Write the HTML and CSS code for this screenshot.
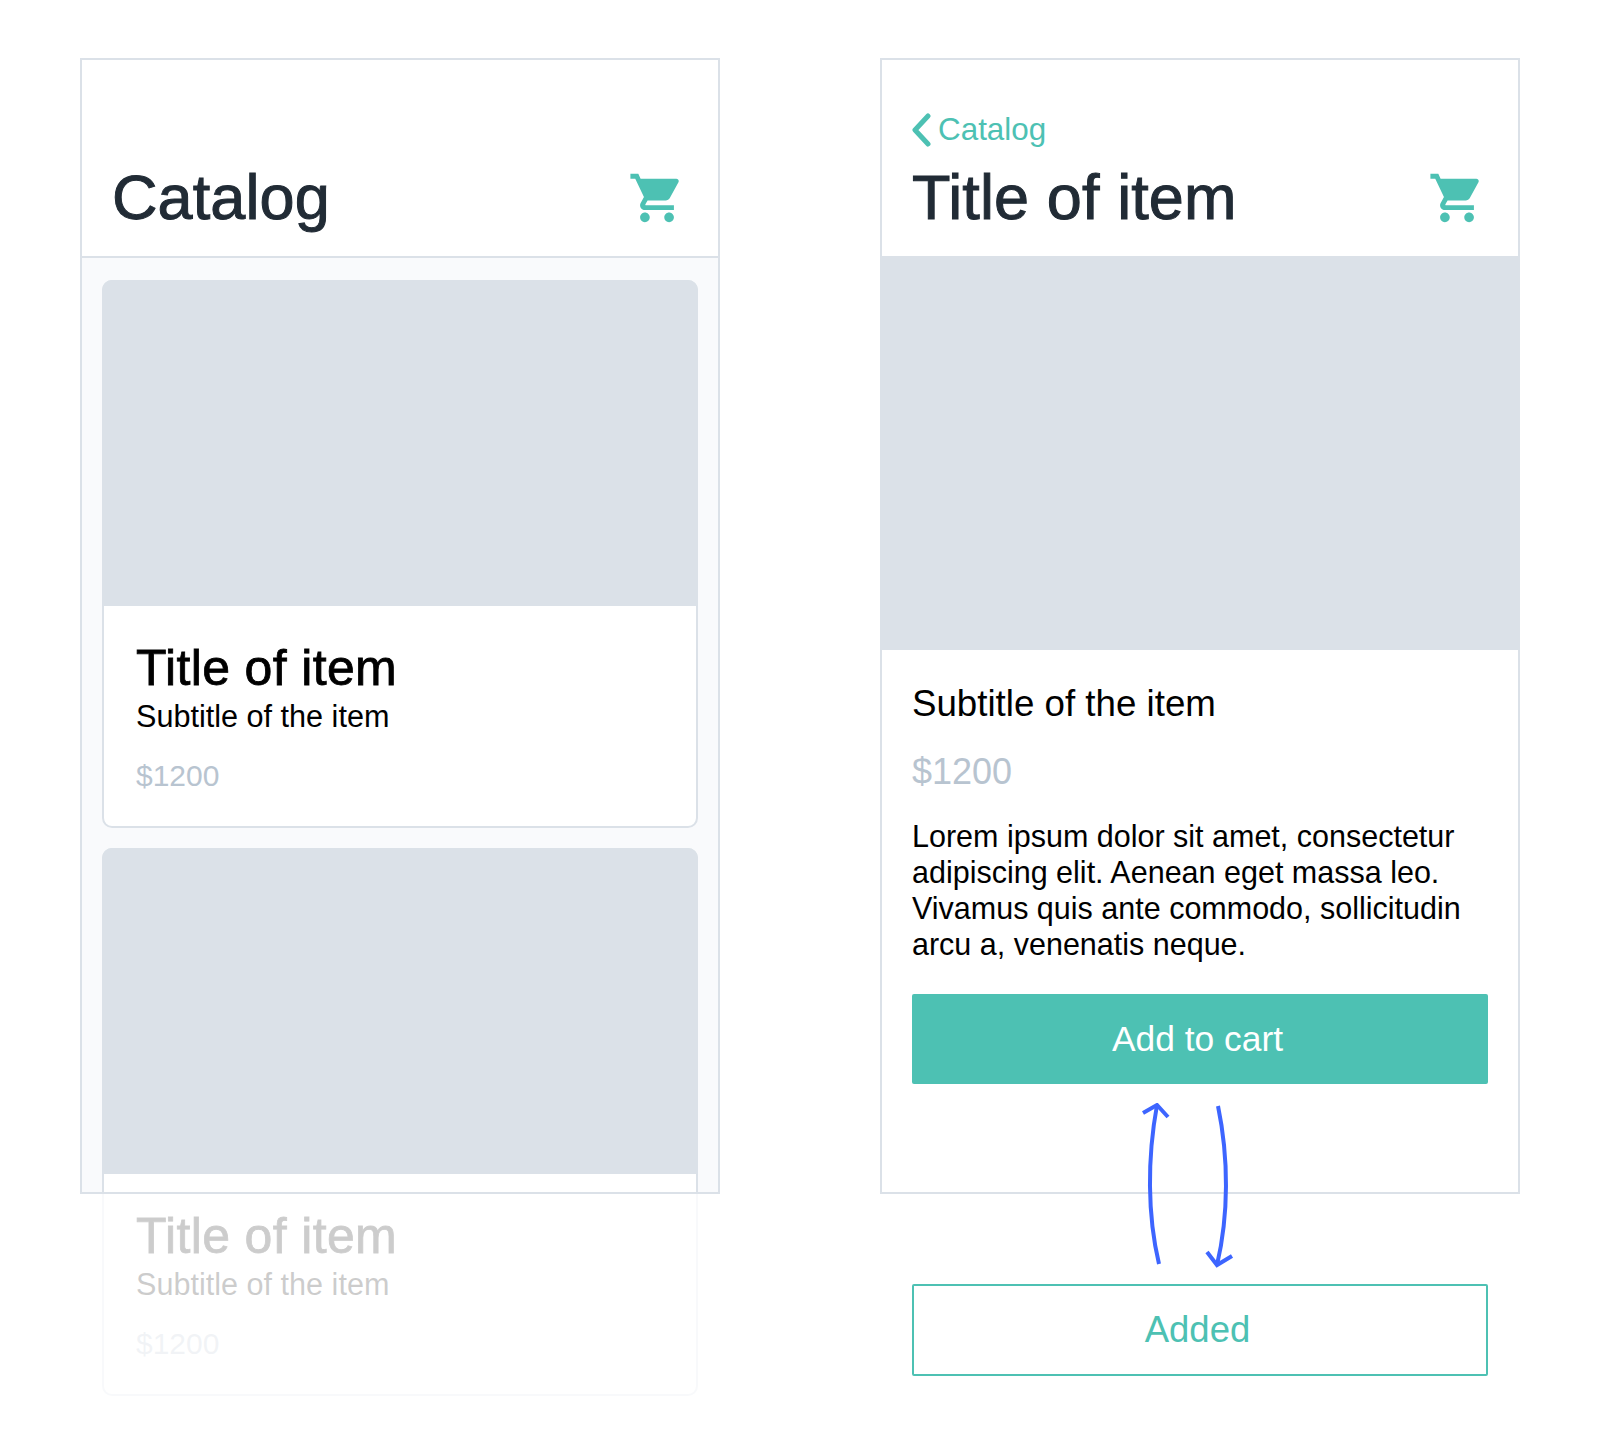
FILE: index.html

```html
<!DOCTYPE html>
<html lang="en">
<head>
    <meta charset="UTF-8">
    <title>Catalog</title>
    <link rel="stylesheet" href="styles.css">
</head>
<body>
    <div class="screens">
        <div class="column">
            <div class="phone phone-list">
                <div class="header">
                    <h1 class="page-title">Catalog</h1>
                    <svg class="cart" viewBox="0 0 24 24"><path d="M7 18c-1.1 0-1.99.9-1.99 2S5.9 22 7 22s2-.9 2-2-.9-2-2-2zM1 2v2h2l3.6 7.59-1.35 2.45c-.16.28-.25.61-.25.96 0 1.1.9 2 2 2h12v-2H7.42c-.14 0-.25-.11-.25-.25l.03-.12.9-1.63h7.45c.75 0 1.41-.41 1.75-1.03l3.58-6.49c.08-.14.12-.31.12-.48 0-.55-.45-1-1-1H5.21l-.94-2H1zm16 16c-1.1 0-1.99.9-1.99 2s.89 2 1.99 2 2-.9 2-2-.9-2-2-2z"/></svg>
                </div>
                <div class="list">
                    <div class="card">
                        <div class="card-img"></div>
                        <div class="card-body">
                            <h2 class="card-title">Title of item</h2>
                            <p class="card-sub">Subtitle of the item</p>
                            <p class="card-price">$1200</p>
                        </div>
                    </div>
                    <div class="card">
                        <div class="card-img"></div>
                        <div class="card-body">
                            <h2 class="card-title">Title of item</h2>
                            <p class="card-sub">Subtitle of the item</p>
                            <p class="card-price">$1200</p>
                        </div>
                    </div>
                </div>
                <div class="fade"></div>
            </div>
        </div>

        <div class="column">
            <div class="phone">
                <div class="header header-plain">
                    <div>
                        <a class="back">
                            <svg class="chevron" viewBox="0 0 20 34"><path d="M17 3 L4 17 L17 31"/></svg>
                            Catalog
                        </a>
                        <h1 class="page-title">Title of item</h1>
                    </div>
                    <svg class="cart" viewBox="0 0 24 24"><path d="M7 18c-1.1 0-1.99.9-1.99 2S5.9 22 7 22s2-.9 2-2-.9-2-2-2zM1 2v2h2l3.6 7.59-1.35 2.45c-.16.28-.25.61-.25.96 0 1.1.9 2 2 2h12v-2H7.42c-.14 0-.25-.11-.25-.25l.03-.12.9-1.63h7.45c.75 0 1.41-.41 1.75-1.03l3.58-6.49c.08-.14.12-.31.12-.48 0-.55-.45-1-1-1H5.21l-.94-2H1zm16 16c-1.1 0-1.99.9-1.99 2s.89 2 1.99 2 2-.9 2-2-.9-2-2-2z"/></svg>
                </div>
                <div class="hero"></div>
                <div class="detail">
                    <p class="detail-sub">Subtitle of the item</p>
                    <p class="detail-price">$1200</p>
                    <p class="detail-text">Lorem ipsum dolor sit amet, consectetur adipiscing elit. Aenean eget massa leo. Vivamus quis ante commodo, sollicitudin arcu a, venenatis neque.</p>
                    <div class="btn btn-solid">Add to cart</div>
                </div>
            </div>
            <div class="btn btn-outline">Added</div>
            <svg class="arrows" viewBox="0 0 100 170">
                <path d="M19 161 C7.3 112 7.3 55 17 2"/>
                <path d="M3 10 L17 2 L28 14"/>
                <path d="M78 3 C88.8 55 88.8 112 77 162"/>
                <path d="M67 149 L77 162 L92 153"/>
            </svg>
        </div>
    </div>
</body>
</html>
```

FILE: styles.css

```css
* {
    padding: 0;
    margin: 0;
    box-sizing: border-box;
}
body {
    background: #fff;
    font-family: "Liberation Sans", Arial, sans-serif;
    color: #000;
}
.screens {
    display: flex;
    align-items: flex-start;
    gap: 160px;
    min-height: 1430px;
    padding: 58px 0 0 80px;
}
.column {
    position: relative;
    width: 640px;
}
.phone {
    position: relative;
    height: 1136px;
    border: 2px solid #dbe1e8;
    background: #fff;
}
.phone-list {
    background: #f9fafc;
}
.header {
    height: 198px;
    padding: 0 32px 20px 30px;
    display: flex;
    justify-content: space-between;
    align-items: flex-end;
    background: #fff;
    border-bottom: 2px solid #dbe1e8;
}
.header-plain {
    height: 196px;
    border-bottom: none;
}
.page-title {
    font-size: 63px;
    line-height: 78px;
    font-weight: 400;
    letter-spacing: 0.1px;
    color: #212b35;
    -webkit-text-stroke: 1px #212b35;
}
.cart {
    width: 58px;
    height: 58px;
    margin-bottom: 9px;
    fill: #4dc1b3;
}
.back {
    display: flex;
    align-items: center;
    gap: 7px;
    margin-bottom: 10px;
    font-size: 31.4px;
    line-height: 36px;
    color: #4dc1b3;
}
.chevron {
    width: 20px;
    height: 34px;
    margin-left: -1px;
    fill: none;
    stroke: #4dc1b3;
    stroke-width: 5;
    stroke-linecap: round;
    stroke-linejoin: round;
}
.list {
    display: flex;
    flex-direction: column;
    gap: 20px;
    padding: 22px 20px 0;
}
.card {
    height: 548px;
    flex-shrink: 0;
    border: 2px solid #dbe1e8;
    border-radius: 10px;
    background: #fff;
}
.card-img {
    height: 326px;
    margin: -2px -2px 0;
    background: #dbe1e8;
    border-radius: 10px 10px 0 0;
}
.card-body {
    padding: 32px 32px 0;
}
.card-title {
    font-size: 50px;
    line-height: 60px;
    font-weight: 400;
    letter-spacing: 0.35px;
    -webkit-text-stroke: 0.8px #000;
}
.card-sub {
    font-size: 30.6px;
    line-height: 36px;
}
.card-price {
    margin-top: 24px;
    font-size: 30px;
    line-height: 36px;
    color: #b8c4d0;
}
/* washes out the part of the card hanging below the phone frame,
   its top border redraws the frame line over the card */
.fade {
    position: absolute;
    left: -2px;
    right: -2px;
    top: 100%;
    height: 220px;
    border-top: 2px solid #dbe1e8;
    background: rgba(255, 255, 255, 0.8);
}
.hero {
    height: 394px;
    background: #dbe1e8;
}
.detail {
    padding: 32px 30px 0;
}
.detail-sub {
    font-size: 36.7px;
    line-height: 44px;
}
.detail-price {
    margin-top: 24px;
    font-size: 36px;
    line-height: 44px;
    color: #b8c4d0;
}
.detail-text {
    margin-top: 24px;
    font-size: 30.5px;
    line-height: 36px;
}
.btn {
    display: flex;
    align-items: center;
    justify-content: center;
    padding-right: 5px;
    border-radius: 2px;
}
.btn-solid {
    height: 90px;
    margin-top: 32px;
    font-size: 35.4px;
    background: #4dc1b3;
    color: #fff;
}
.btn-outline {
    height: 92px;
    margin: 90px 32px 0;
    font-size: 36.5px;
    border: 2px solid #4dc1b3;
    color: #4dc1b3;
}
.arrows {
    position: absolute;
    left: 260px;
    top: 1045px;
    width: 100px;
    height: 170px;
    fill: none;
    stroke: #3d65ff;
    stroke-width: 4;
}
```
